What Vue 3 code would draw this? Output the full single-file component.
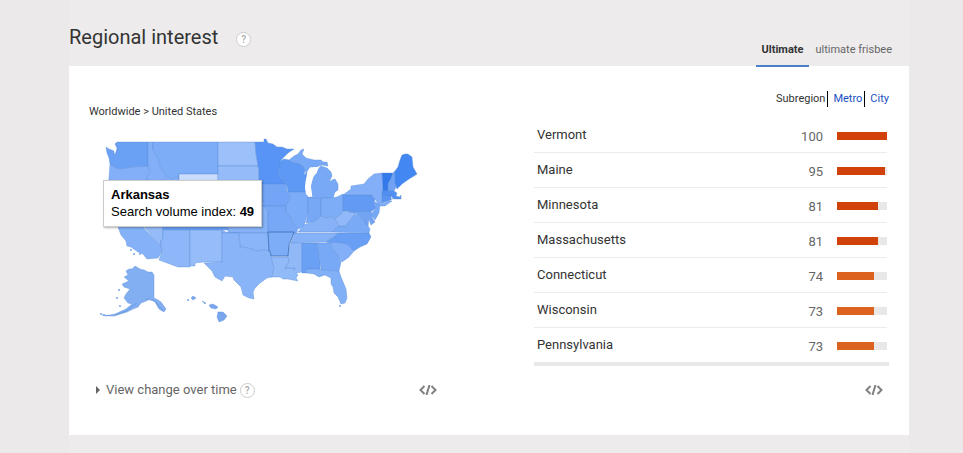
<script setup>
import { ref } from 'vue'

const regions = [
  { name: 'Vermont', value: 100, color: '#d04209' },
  { name: 'Maine', value: 95, color: '#d04209' },
  { name: 'Minnesota', value: 81, color: '#d04209' },
  { name: 'Massachusetts', value: 81, color: '#d04209' },
  { name: 'Connecticut', value: 74, color: '#dc6220' },
  { name: 'Wisconsin', value: 73, color: '#dc6220' },
  { name: 'Pennsylvania', value: 73, color: '#dc6220' }
]

const states = [
  { id: 'OR', fill: '#82aff7', d: 'M110 164L113 166 119 169 131 167 148 166 150 171 147 178 147 190 108 190 109 178Z' },
  { id: 'WA', fill: '#6ba1f5', d: 'M106 147L109 149 114 151 114 154 116 153 117 148 115 144 117 142 148 142 148 166 131 167 120 169 116 168 113 166 110 164 109 158 107 153Z' },
  { id: 'ID', fill: '#82aff7', d: 'M148 142H153V150L159 160 160 167 163 171 166 176 171 178 179 177V190H147V178L150 171 148 166Z' },
  { id: 'MT', fill: '#7eadf8', d: 'M153 142H218V174H179V177L171 178 166 176 163 171 160 167 159 160 153 150Z' },
  { id: 'WY', fill: '#c9dcfb', d: 'M179 174H218V205H179Z' },
  { id: 'ND', fill: '#9cc0f9', d: 'M218 142H255L256 153 258 166H218Z' },
  { id: 'SD', fill: '#96bbf9', d: 'M218 166H258L259 170V190H218Z' },
  { id: 'NE', fill: '#84b0f7', d: 'M218 186H259L264 206H228V200H218Z' },
  { id: 'KS', fill: '#86b2f7', d: 'M228 206H264L268 211V233H228Z' },
  { id: 'NV', fill: '#95bbf9', d: 'M132 190H163V239L161 240 161 247 141 223Z' },
  { id: 'CA', fill: '#84b1f7', d: 'M108 190H132V215L161 247 162 251 158 258 147 259 143 254 138 252 131 247 127 246 126 241 121 235 118 227 108 207Z' },
  { id: 'CO', fill: '#6ba2f7', d: 'M163 200H228V230H163Z' },
  { id: 'AZ', fill: '#8db7f9', d: 'M163 230H190V267H178L159 260 162 251 161 247V240L163 239Z' },
  { id: 'NM', fill: '#96bdfa', d: 'M190 230H222V262H204L195 263V266H190Z' },
  { id: 'OK', fill: '#8ab5f8', d: 'M222 230L228 233H268L269 251 264 250 257 251 248 248 240 247 239 233H222Z' },
  { id: 'TX', fill: '#8ab4f8', d: 'M222 233H239L240 247 248 248 257 251 264 250 269 251 271 257 272 260 274 268 272 277 267 278 260 283 255 288 253 292 254 299 249 298 243 295 241 287 234 280 233 277 225 276 222 281 215 277 212 271 204 263 222 262Z' },
  { id: 'MN', fill: '#5794f5', d: 'M255 142H264V139L266 139 268 143 273 144 277 147 282 147 287 149 294 149 288 153 283 158 280 161V168L278 171 279 176 284 180 286 184H259V170L258 166 256 153Z' },
  { id: 'IA', fill: '#73a5f6', d: 'M259 184H286L287 191 291 196 289 201 286 206H264Z' },
  { id: 'MO', fill: '#76a8f7', d: 'M264 206H286L286 211 291 217 292 222 298 228 297 232 294 235 268 233V211Z' },
  { id: 'AR', fill: '#7eadf7', d: 'M268 232H294L292 238 289 245 288 256H271L270 251 269 251Z' },
  { id: 'LA', fill: '#91baf9', d: 'M271 257H288L289 262 285 268H295L295 272 298 275 296 278 298 281 293 280 288 279 283 279 280 277 272 277 274 268 272 261Z' },
  { id: 'WI', fill: '#5e99f5', d: 'M280 161L284 159 289 160 292 162 298 163 303 166 305 170 304 175 307 172 306 180 305 187 306 192H288L287 187 286 184 284 180 279 176 278 171 280 168Z' },
  { id: 'IL', fill: '#7bacf7', d: 'M288 192H306L308 197V213L306 219 304 226 299 229 298 228 292 222 291 217 286 211V206L289 201 291 196Z' },
  { id: 'IN', fill: '#76a8f6', d: 'M308 197H321V216L317 220 312 222 306 223 308 213Z' },
  { id: 'MI', fill: '#77a9f6', d: 'M289 160L294 156 298 154 301 150 304 149 302 154 306 158 314 160 321 160 323 162 327 162 328 166 322 165 316 167 310 167 306 173 303 166 298 163 292 162ZM321 166L327 168 331 172 332 176 329 182 332 180 335 179 338 184 338 190 335 192 333 198H313L311 190 311 184 314 176 317 173 317 170Z' },
  { id: 'OH', fill: '#7dadf7', d: 'M321 198H331L337 197 343 194V210L341 214 335 219 331 217 327 218 321 216Z' },
  { id: 'KY', fill: '#87b2f7', d: 'M298 232L304 225 312 222 317 220 321 216 327 218 331 217 335 219 339 226 332 232Z' },
  { id: 'TN', fill: '#86b2f7', d: 'M295 233L338 233 334 237 326 242 291 243Z' },
  { id: 'MS', fill: '#91b9f8', d: 'M291 243H302V272L296 273 295 268H285L289 262 288 256 289 248Z' },
  { id: 'AL', fill: '#6ba1f5', d: 'M302 243H317L320 262V269H306L307 273 302 273Z' },
  { id: 'GA', fill: '#77a9f7', d: 'M317 243H330L333 249 338 255 341 262 339 271 321 270 320 262Z' },
  { id: 'FL', fill: '#82b0f7', d: 'M306 269H320L321 270 339 271 341 277 346 289 347 298 345 303 341 304 338 297 334 293 333 287 331 284 331 278 325 275 319 277 314 274 307 273Z' },
  { id: 'SC', fill: '#82aff7', d: 'M330 243L336 242 344 242 347 244 354 251 349 257 342 262 338 255 333 249Z' },
  { id: 'NC', fill: '#689ff4', d: 'M326 242L334 237 338 233H369L371 237 367 244 360 247 354 251 347 244 336 242 330 243Z' },
  { id: 'VA', fill: '#79aaf6', d: 'M332 232L339 226 345 226 350 220 354 215 358 214 362 218 366 223 370 229 369 233Z' },
  { id: 'WV', fill: '#91b9f9', d: 'M335 219L341 214 343 210 347 212H357L354 215 350 220 345 226H339Z' },
  { id: 'MD', fill: '#73a4f3', d: 'M347 211H371L373 219 375 222 371 225 369 219 368 226 364 220 358 214Z' },
  { id: 'PA', fill: '#639bf4', d: 'M343 195H372L375 199 374 205 376 208 372 211H343Z' },
  { id: 'NJ', fill: '#77a8f5', d: 'M375 202L380 204 379 213 375 220 371 214 376 208 374 205Z' },
  { id: 'NY', fill: '#82aff7', d: 'M343 195L351 189 351 186 364 184 368 179 374 174 382 173 383 191 382 204 389 201 392 201 385 206 380 206 375 199 372 195Z' },
  { id: 'VT', fill: '#3279eb', d: 'M382 173H393L391 179 388 184V191H383Z' },
  { id: 'NH', fill: '#6fa2f3', d: 'M393 173L395 171 396 187 394 191H388V184L391 179Z' },
  { id: 'ME', fill: '#4387f3', d: 'M395 171L398 167 400 160 402 155 405 154 408 154 412 157 413 167 417 174 414 176 409 179 402 184 397 189 395 183Z' },
  { id: 'MA', fill: '#508ff1', d: 'M382 191H394L397 193 396 196 400 197 401 195 401 199 394 199 391 196H382Z' },
  { id: 'CT', fill: '#5a95f1', d: 'M382 196H391V200L382 203Z' },
  { id: 'AK', fill: '#82aff2', d: 'M126 271L129 269 132 269 135 266 140 269 144 270 148 272 152 272 154 275V298L158 300 161 302 166 309 164 312 159 309 155 302 150 299 146 301 141 303 138 307 133 309 127 312 117 315 105 316 115 314 126 309 132 304 128 303 124 298 126 294 130 289 124 287 122 284 129 281 124 277 128 275Z' },
  { id: 'HI', fill: '#78a7ef', d: 'M218 312L223 312 227 316 224 320 219 322 217 317ZM191 298L193 296 196 298 193 300ZM202 301L206 303 205 304ZM209 305L213 304 218 307 216 309 211 308Z' }
]

const islets = [
  [119, 290, 1], [117, 298, 1], [120, 306, 1], [101, 314, 1], [104, 315, 1], [188, 300, 1],
  [131, 250, 1], [134, 254, 1], [140, 254, 1], [340, 306, 1]
]

const resolution = ref('Subregion')
const activeTerm = ref('Ultimate')
</script>

<template>
  <main class="page">
    <div class="content">
      <header class="heading">
        <h1>Regional interest</h1>
        <button class="help" type="button" aria-label="Help">?</button>
        <nav class="terms">
          <button
            v-for="term in ['Ultimate', 'ultimate frisbee']"
            :key="term"
            type="button"
            :class="{ active: term === activeTerm }"
            @click="activeTerm = term"
          >{{ term }}</button>
        </nav>
      </header>

      <section class="panel">
        <div class="map-column">
          <p class="crumbs">Worldwide &gt; United States</p>
          <div class="map-wrap">
            <svg class="map" viewBox="89 130 350 210" role="img" aria-label="Search interest by state">
              <g class="states">
                <path v-for="s in states" :key="s.id" :d="s.d" :fill="s.fill" />
              </g>
              <path class="selected" d="M268 232H294L292 238 289 245 288 256H271L270 251 269 251Z" />
              <path class="lake" d="M305 187L306 179 309 171 314 167 319 167 317 172 313 177 311 186 312 195 309 197 306 194Z" />
              <path class="coast" d="M116 143L118 148 116 153M102 315L114 316 126 311 137 303M146 299L155 301 163 311M364 219L366 225M391 199L397 198" />
              <circle v-for="([x, y, r], i) in islets" :key="i" :cx="x" :cy="y" :r="r" fill="#78a5eb" />
            </svg>
            <div class="tooltip">
              <strong>Arkansas</strong>
              <span>Search volume index: <b>49</b></span>
            </div>
          </div>
          <footer class="tools">
            <button class="change" type="button">
              <svg class="arrow" viewBox="0 0 4 8"><path d="M0 0L4 4 0 8Z" fill="#666" /></svg>
              View change over time
            </button>
            <button class="help" type="button" aria-label="Help">?</button>
            <button class="embed" type="button" aria-label="Embed">
              <svg viewBox="0 0 18 10"><path d="M5.500 1L1.500 5 5.500 9M12.500 1L16.500 5 12.500 9M10.500 0L7.500 10" /></svg>
            </button>
          </footer>
        </div>

        <div class="table-column">
          <nav class="resolution">
            <span>{{ resolution }}</span>
            <a href="#metro">Metro</a>
            <a href="#city">City</a>
          </nav>
          <table>
            <tbody>
              <tr v-for="r in regions" :key="r.name">
                <th scope="row">{{ r.name }}</th>
                <td class="value">{{ r.value }}</td>
                <td class="meter">
                  <div class="track"><div class="bar" :style="{ width: r.value + '%', background: r.color }"></div></div>
                </td>
              </tr>
            </tbody>
          </table>
          <div class="table-end"></div>
          <footer class="tools">
            <button class="embed" type="button" aria-label="Embed">
              <svg viewBox="0 0 18 10"><path d="M5.500 1L1.500 5 5.500 9M12.500 1L16.500 5 12.500 9M10.500 0L7.500 10" /></svg>
            </button>
          </footer>
        </div>
      </section>
    </div>
  </main>
</template>

<style>
body {
  background: #ebe9ea;
}
</style>

<style scoped>
.page {
  box-sizing: border-box;
  min-height: 100vh;
  padding: 0 54px 0 69px;
  font-family: Roboto, "Liberation Sans", sans-serif;
  color: #333;
  display: flex;
}
.content {
  flex: 1;
  background: #edebec;
  padding-bottom: 17px;
}
button {
  font: inherit;
  color: inherit;
  background: none;
  border: 0;
  padding: 0;
  cursor: pointer;
}
.heading {
  display: flex;
  align-items: flex-end;
  height: 66px;
}
h1 {
  margin: 0 18px 16px 0;
  font-size: 20px;
  line-height: 26px;
  font-weight: 400;
}
.help {
  box-sizing: border-box;
  width: 15px;
  height: 15px;
  border: 1px solid #ccc;
  border-radius: 50%;
  background: #fff;
  color: #aaa;
  font-size: 10px;
  line-height: 13px;
  font-weight: 500;
  text-align: center;
}
.heading .help {
  margin-bottom: 19px;
}
.terms {
  margin-left: auto;
  margin-right: 11px;
  display: flex;
  font-size: 11px;
  line-height: 16px;
  color: #666;
}
.terms button {
  padding: 0 6px 7px;
  border-bottom: 2px solid transparent;
  margin-bottom: -1px;
}
.terms .active {
  color: #333;
  font-weight: 700;
  border-bottom-color: #4a80c8;
}
.panel {
  display: grid;
  grid-template-columns: minmax(0, 350fr) minmax(0, 355fr);
  column-gap: 95px;
  padding: 25px 20px 35px;
  background: #fff;
}
.map-column {
  display: flex;
  flex-direction: column;
}
.crumbs {
  margin: 13px 0 10px;
  font-size: 11px;
  line-height: 16px;
}
.map-wrap {
  position: relative;
}
.map {
  display: block;
  width: 100%;
}
.states path {
  stroke: #5d8fd8;
  stroke-opacity: 0.4;
  stroke-linejoin: round;
}
.selected {
  fill: none;
  stroke: #4474bd;
  stroke-opacity: 0.8;
}
.lake {
  fill: #fff;
}
.coast {
  fill: none;
  stroke: #6796df;
  stroke-opacity: 0.8;
}
.tooltip {
  position: absolute;
  left: 14px;
  top: 50px;
  display: flex;
  flex-direction: column;
  padding: 5px 7px 6px;
  border: 1px solid #ccc;
  background: #fff;
  box-shadow: 1px 1px 2px rgba(0, 0, 0, 0.3);
  color: #000;
  font-family: "Liberation Sans", Arial, sans-serif;
  font-size: 13px;
  line-height: 17px;
  white-space: nowrap;
}
.tools {
  display: flex;
  align-items: center;
  height: 20px;
}
.map-column .tools {
  margin-top: auto;
  padding: 0 2px 0 7px;
}
.change {
  display: flex;
  align-items: center;
  gap: 6px;
  margin-right: 3px;
  font-size: 13px;
  line-height: 20px;
  color: #666;
}
.arrow {
  width: 4px;
  height: 8px;
}
.embed {
  display: flex;
  margin-left: auto;
}
.embed svg {
  width: 18px;
  height: 10px;
  fill: none;
  stroke: #808080;
  stroke-width: 2;
}
.table-column .tools {
  padding-right: 6px;
  margin-top: 14px;
}
.resolution {
  display: flex;
  justify-content: flex-end;
  font-size: 11px;
  line-height: 16px;
}
.resolution a {
  margin-left: 2px;
  padding-left: 5px;
  border-left: 1px solid #000;
  color: #1a4fc4;
  text-decoration: none;
}
table {
  width: calc(100% - 2px);
  margin-top: 11px;
  border-collapse: collapse;
}
tr + tr {
  border-top: 1px solid #ebebeb;
}
th,
td {
  height: 32px;
  padding: 2px 0 0;
}
th {
  padding: 0 0 2px 3px;
  text-align: left;
  font-size: 13px;
  font-weight: 400;
}
.value {
  width: 50px;
  padding-right: 14px;
  text-align: right;
  font-size: 13px;
  color: #666;
}
.meter {
  width: 50px;
}
.track {
  height: 8px;
  background: #e8e8e8;
}
.bar {
  height: 8px;
}
.table-end {
  height: 4px;
  background: #e8e8e8;
}
</style>
